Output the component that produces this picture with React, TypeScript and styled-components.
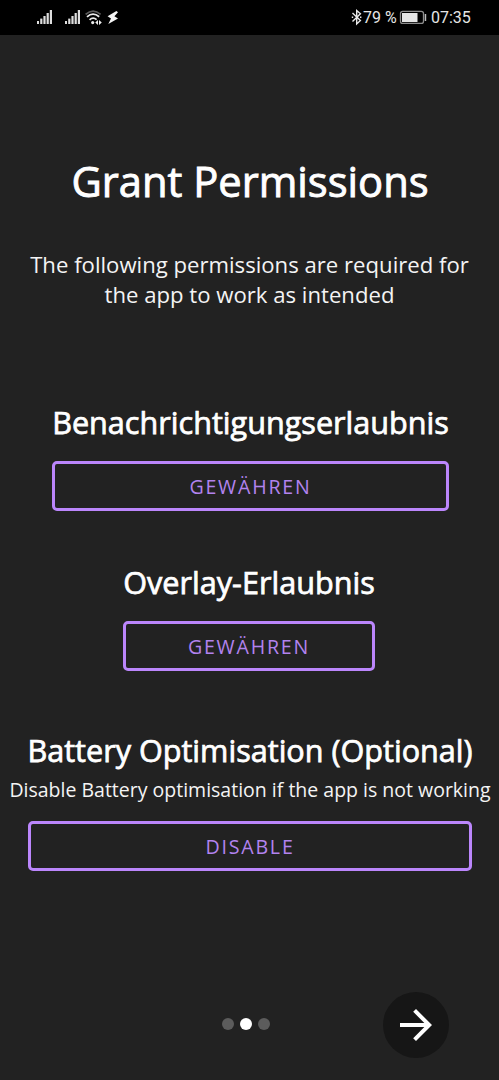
import React from "react";
import styled, { createGlobalStyle } from "styled-components";

const GlobalStyle = createGlobalStyle`
  * { box-sizing: border-box; }
  body { margin: 0; background: #222222; }
`;

const Screen = styled.div`
  display: flex;
  flex-direction: column;
  width: 499px;
  height: 1080px;
  overflow: hidden;
  background: #222222;
  color: #ffffff;
  font-family: "Open Sans", sans-serif;
`;

const StatusBar = styled.header`
  display: flex;
  justify-content: space-between;
  flex: none;
  height: 35px;
  background: #000000;
  color: #e6e6e6;
  font-family: Roboto, sans-serif;
  font-size: 16px;
  line-height: 35px;
`;

const StatusGroup = styled.div<{ $start?: number; $end?: number }>`
  display: flex;
  align-items: center;
  padding-left: ${(p) => p.$start ?? 0}px;
  padding-right: ${(p) => p.$end ?? 0}px;
  white-space: nowrap;
`;

const BatteryText = styled.span`
  width: 36px;
`;

const Clock = styled.span`
  width: 39px;
  margin-left: 4px;
`;

const Content = styled.main`
  display: flex;
  flex-direction: column;
  align-items: center;
  flex: 1;
  padding: 117px 0 0 1px;
`;

const Title = styled.h1`
  margin: 0;
  font-size: 41.7px;
  font-weight: 400;
  line-height: 58px;
  white-space: nowrap;
  -webkit-text-stroke: 0.9px currentColor;
`;

const Intro = styled.p`
  margin: 39px 1px 0 0;
  color: #f4f4f4;
  font-size: 22.15px;
  line-height: 30px;
  text-align: center;
  white-space: nowrap;
`;

const Permission = styled.section<{ $gap: number; $end?: number }>`
  display: flex;
  flex-direction: column;
  align-items: center;
  margin-top: ${(p) => p.$gap}px;
  margin-right: ${(p) => p.$end ?? 0}px;
`;

const Heading = styled.h2`
  margin: 0;
  font-size: 30.6px;
  font-weight: 400;
  line-height: 42px;
  white-space: nowrap;
  -webkit-text-stroke: 0.75px currentColor;
`;

const Note = styled.p`
  margin: 5px 0 0;
  color: #f4f4f4;
  font-size: 19.5px;
  line-height: 27px;
  white-space: nowrap;
`;

const OutlineButton = styled.button<{ $width: number }>`
  width: ${(p) => p.$width}px;
  height: 50px;
  margin-top: 18px;
  padding: 1px 0 0;
  border: 3px solid #bb86fc;
  border-radius: 5px;
  background: transparent;
  color: #b283ef;
  font-family: inherit;
  font-size: 19.6px;
  line-height: 43px;
  letter-spacing: 1.8px;
`;

const Footer = styled.footer`
  display: flex;
  align-items: center;
  justify-content: space-between;
  flex: none;
  height: 66px;
  margin-bottom: 22px;
  padding: 0 50px 0 222px;
`;

const Dots = styled.div`
  display: flex;
  gap: 6px;
  padding-bottom: 2px;
`;

const Dot = styled.span<{ $active?: boolean }>`
  width: 12px;
  height: 12px;
  border-radius: 50%;
  background: ${(p) => (p.$active ? "#ffffff" : "#5c5c5c")};
`;

const NextButton = styled.button`
  display: flex;
  align-items: center;
  justify-content: center;
  width: 66px;
  height: 66px;
  padding: 0;
  border: 0;
  border-radius: 50%;
  background: #161616;
  color: #ffffff;
`;

const SignalBars = ({ x }: { x: number }) => (
  <g fill="#dedede">
    <rect x={x} y="21" width="2" height="3" />
    <rect x={x + 3.2} y="18.6" width="2.2" height="5.4" />
    <rect x={x + 6.4} y="16" width="2.2" height="8" />
    <rect x={x + 9.6} y="13" width="2.2" height="11" />
    <rect x={x + 12.8} y="10" width="2.2" height="14" />
  </g>
);

const NetworkIcons = () => (
  <svg width="90" height="35" viewBox="36 0 90 35" fill="none">
    <SignalBars x={37} />
    <SignalBars x={65} />
    <path d="M85.6 14.4Q93 7.8 100.6 14.4" stroke="#5d5d5d" strokeWidth="1.7" />
    <path d="M87 16.8Q93 11.4 99.2 16.8M89.6 19.8Q93 16.6 96.6 19.6" stroke="#ececec" strokeWidth="1.8" />
    <circle cx="92.7" cy="22.6" r="1.6" fill="#ececec" />
    <path d="M98 20V25L95.2 22.5ZM99 20V25L101.8 22.5Z" fill="#ececec" />
    <path d="M116.4 11L107.6 16.3L111 18.4L108.3 24L118 18.5L114.4 16.3L118 12.3Z" fill="#f4f4f4" />
  </svg>
);

const BluetoothIcon = () => (
  <svg width="12" height="35" viewBox="0 0 12 35" fill="none" stroke="#e8e8e8" strokeWidth="1.4">
    <path d="M1.5 13L9.4 20.6L5.7 24V10.5L9.4 13.8L1.5 21.4" />
    <path d="M0.8 17.2H2.2M9 17.2H10.4" />
  </svg>
);

const BatteryIcon = () => (
  <svg width="28" height="35" viewBox="0 0 28 35">
    <rect x="1.5" y="11.4" width="23" height="12" rx="2.2" fill="none" stroke="#8c8c8c" strokeWidth="1.3" />
    <rect x="3" y="13" width="15.5" height="9" fill="#e6e6e6" />
    <rect x="25.7" y="14" width="1.5" height="7" fill="#bdbdbd" />
  </svg>
);

const ArrowIcon = () => (
  <svg width="48" height="48" viewBox="0 0 24 24" fill="currentColor">
    <path d="M12 4l-1.41 1.41L16.17 11H4v2h12.17l-5.58 5.59L12 20l8-8z" />
  </svg>
);

export default function App() {
  return (
    <Screen>
      <GlobalStyle />
      <StatusBar>
        <StatusGroup $start={36}>
          <NetworkIcons />
        </StatusGroup>
        <StatusGroup $end={29}>
          <BluetoothIcon />
          <BatteryText>79 %</BatteryText>
          <BatteryIcon />
          <Clock>07:35</Clock>
        </StatusGroup>
      </StatusBar>
      <Content>
        <Title>Grant Permissions</Title>
        <Intro>
          The following permissions are required for
          <br />
          the app to work as intended
        </Intro>
        <Permission $gap={92} $end={-1}>
          <Heading>Benachrichtigungserlaubnis</Heading>
          <OutlineButton $width={397}>GEWÄHREN</OutlineButton>
        </Permission>
        <Permission $gap={50} $end={2}>
          <Heading>Overlay-Erlaubnis</Heading>
          <OutlineButton $width={252}>GEWÄHREN</OutlineButton>
        </Permission>
        <Permission $gap={58}>
          <Heading>Battery Optimisation (Optional)</Heading>
          <Note>Disable Battery optimisation if the app is not working</Note>
          <OutlineButton $width={444}>DISABLE</OutlineButton>
        </Permission>
      </Content>
      <Footer>
        <Dots>
          <Dot />
          <Dot $active />
          <Dot />
        </Dots>
        <NextButton aria-label="Next">
          <ArrowIcon />
        </NextButton>
      </Footer>
    </Screen>
  );
}
